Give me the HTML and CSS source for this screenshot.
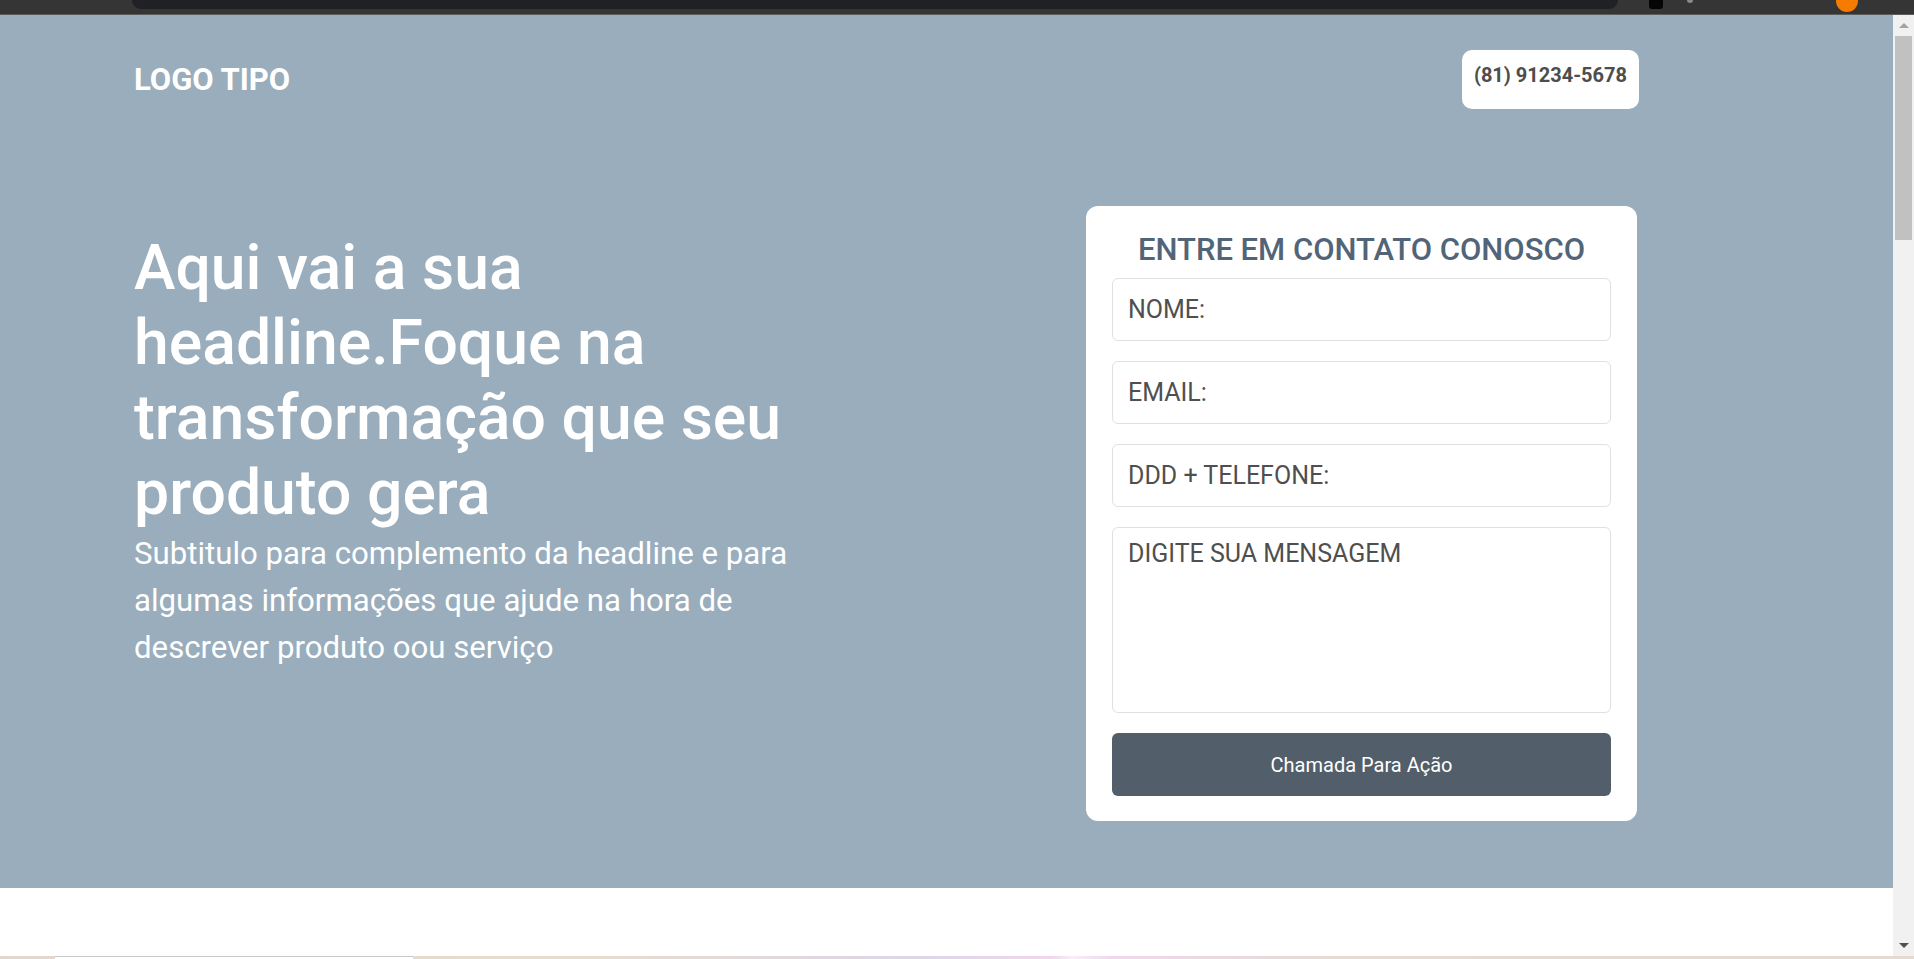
FILE: index.html
```html
<!DOCTYPE html>
<html lang="pt-BR">
<head>
<meta charset="utf-8">
<title>Landing Page</title>
<link rel="stylesheet" href="styles.css">
</head>
<body>
  <div class="chrome">
    <div class="omnibox"></div>
    <span class="ext ext-black"></span>
    <span class="ext ext-gray"></span>
    <span class="avatar"></span>
  </div>
  <div class="viewport">
    <main class="page">
      <section class="hero">
        <header class="top">
          <div class="logo">LOGO TIPO</div>
          <a class="phone" href="#">(81) 91234-5678</a>
        </header>
        <div class="hero-body">
          <div class="intro">
            <h1 class="headline">Aqui vai a sua headline.Foque na transformação que seu produto gera</h1>
            <p class="subtitle">Subtitulo para complemento da headline e para algumas informações que ajude na hora de descrever produto oou serviço</p>
          </div>
          <form class="card">
            <h2 class="card-title">ENTRE EM CONTATO CONOSCO</h2>
            <div class="fields">
              <input class="field" type="text" placeholder="NOME:">
              <input class="field" type="email" placeholder="EMAIL:">
              <input class="field" type="tel" placeholder="DDD + TELEFONE:">
              <textarea class="field field-area" placeholder="DIGITE SUA MENSAGEM"></textarea>
              <button class="cta" type="button">Chamada Para Ação</button>
            </div>
          </form>
        </div>
      </section>
      <section class="below"></section>
    </main>
    <div class="scrollbar">
      <span class="arrow arrow-up"></span>
      <span class="thumb"></span>
      <span class="track"></span>
      <span class="arrow arrow-down"></span>
    </div>
  </div>
  <div class="taskbar"><span class="tab"></span></div>
</body>
</html>
```
FILE: styles.css
```css
* { box-sizing: border-box; }

html, body {
  margin: 0;
  height: 959px;
  overflow: hidden;
}

body {
  display: flex;
  flex-direction: column;
  font-family: Roboto, "Noto Sans", "Liberation Sans", sans-serif;
  background: #ffffff;
}

/* browser chrome strip */
.chrome {
  height: 15px;
  flex: none;
  display: flex;
  align-items: flex-start;
  background: #353535;
  border-bottom: 1px solid #5c5c5c;
}
.omnibox {
  margin-left: 132px;
  width: 1486px;
  height: 9px;
  background: #202124;
  border-radius: 0 0 10px 10px;
}
.ext-black {
  margin-left: 31px;
  width: 14px;
  height: 9px;
  background: #050505;
  border-radius: 0 0 3px 3px;
}
.ext-gray {
  margin-left: 24px;
  width: 6px;
  height: 3px;
  background: #8a8a8a;
  border-radius: 0 0 3px 3px;
}
.avatar {
  margin-left: 143px;
  margin-top: -10px;
  width: 22px;
  height: 22px;
  border-radius: 50%;
  background: #f57c00;
}

.viewport {
  flex: 1;
  display: flex;
  min-height: 0;
}

.page {
  flex: 1;
  display: flex;
  flex-direction: column;
  min-width: 0;
}

/* hero */
.hero {
  height: 873px;
  flex: none;
  background: #99adbc;
}

.top {
  display: flex;
  align-items: center;
  justify-content: space-between;
  padding: 35px 254px 0 134px;
}
.logo {
  color: #ffffff;
  font-weight: 700;
  font-size: 31px;
  line-height: 36px;
}
.phone {
  display: block;
  background: #ffffff;
  color: #4d4d4d;
  text-decoration: none;
  font-weight: 700;
  font-size: 20px;
  line-height: 24px;
  padding: 13px 12px 22px;
  border-radius: 10px;
}

.hero-body {
  display: flex;
  justify-content: space-between;
  align-items: flex-start;
  padding: 97px 256px 0 134px;
}

.intro {
  width: 690px;
  margin-top: 24px;
  color: #ffffff;
}
.headline {
  margin: 0;
  font-size: 62.5px;
  font-weight: 500;
  line-height: 75px;
}
.subtitle {
  margin: 0;
  font-size: 31.2px;
  font-weight: 400;
  line-height: 47px;
}

/* form card */
.card {
  width: 551px;
  margin: 0;
  background: #ffffff;
  border-radius: 12px;
  padding: 26px 26px 25px;
}
.card-title {
  margin: 0 0 11px;
  text-align: center;
  color: #526578;
  font-size: 31px;
  font-weight: 500;
  line-height: 35px;
}
.fields {
  display: flex;
  flex-direction: column;
  gap: 20px;
}
.field {
  display: block;
  width: 100%;
  height: 63px;
  margin: 0;
  padding: 0 15px;
  border: 1px solid #dde0e4;
  border-radius: 6px;
  background: #ffffff;
  font-family: inherit;
  font-size: 25px;
  color: #4d4d4d;
  outline: none;
}
.field::placeholder {
  color: #4f4f4f;
  opacity: 1;
}
.field-area {
  height: 186px;
  padding: 11px 15px;
  line-height: 29px;
  resize: none;
}
.cta {
  display: block;
  width: 100%;
  height: 63px;
  border: none;
  border-radius: 6px;
  background: #525e69;
  color: #ffffff;
  font-family: inherit;
  font-size: 20px;
  font-weight: 400;
  cursor: pointer;
}

.below {
  flex: 1;
  background: #ffffff;
}

/* fake scrollbar */
.scrollbar {
  width: 21px;
  flex: none;
  display: flex;
  flex-direction: column;
  align-items: center;
  background: #f1f1f1;
}
.arrow {
  flex: none;
  height: 21px;
  width: 17px;
  display: flex;
  align-items: center;
  justify-content: center;
}
.arrow-up::before {
  content: "";
  border-left: 5px solid transparent;
  border-right: 5px solid transparent;
  border-bottom: 5px solid #a3a3a3;
}
.arrow-down::before {
  content: "";
  border-left: 5px solid transparent;
  border-right: 5px solid transparent;
  border-top: 5px solid #505050;
}
.thumb {
  flex: none;
  width: 17px;
  height: 204px;
  background: #c1c1c1;
}
.track { flex: 1; }

.taskbar {
  height: 3px;
  flex: none;
  display: flex;
  background: linear-gradient(90deg, #e2d6d0 0%, #e8dccc 30%, #dcd6e8 48%, #f1d6ee 55%, #f8eef6 56%, #efd8ec 58%, #e5dbd3 70%, #e6dad0 100%);
}
.tab {
  margin-left: 55px;
  width: 358px;
  background: #ffffff;
  border-top: 1px solid #c8c8c8;
}
```
